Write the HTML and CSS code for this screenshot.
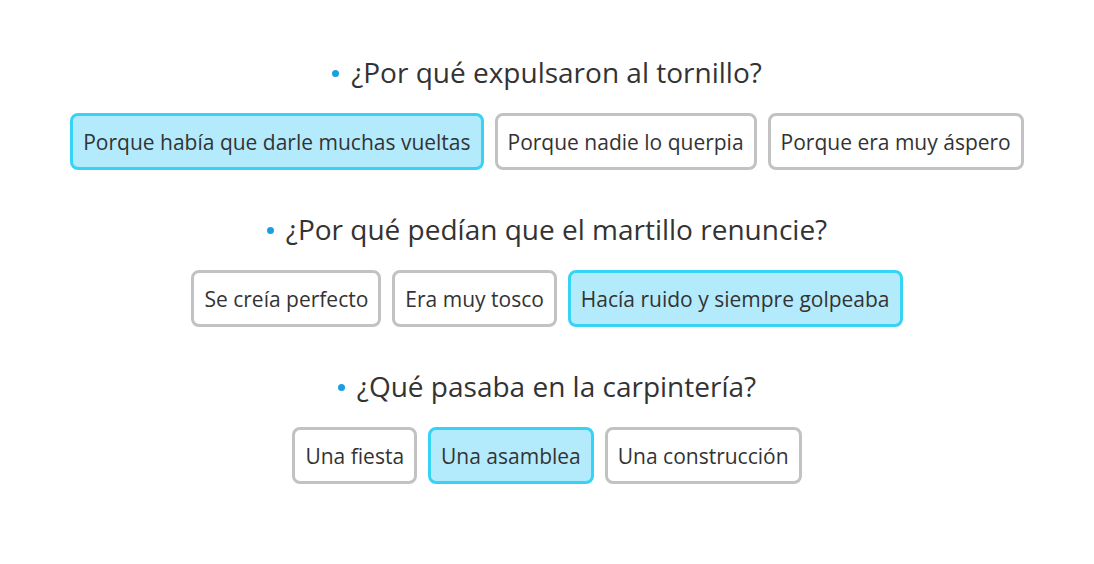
FILE: index.html
```html
<!DOCTYPE html>
<html lang="es">
<head>
<meta charset="utf-8">
<link rel="stylesheet" href="styles.css">
</head>
<body>
<main class="quiz">
  <section class="item">
    <h2 class="question"><span class="dot"></span>¿Por qué expulsaron al tornillo?</h2>
    <div class="options">
      <button class="opt selected">Porque había que darle muchas vueltas</button>
      <button class="opt">Porque nadie lo querpia</button>
      <button class="opt">Porque era muy áspero</button>
    </div>
  </section>
  <section class="item">
    <h2 class="question"><span class="dot"></span>¿Por qué pedían que el martillo renuncie?</h2>
    <div class="options">
      <button class="opt">Se creía perfecto</button>
      <button class="opt">Era muy tosco</button>
      <button class="opt selected">Hacía ruido y siempre golpeaba</button>
    </div>
  </section>
  <section class="item">
    <h2 class="question"><span class="dot"></span>¿Qué pasaba en la carpintería?</h2>
    <div class="options">
      <button class="opt">Una fiesta</button>
      <button class="opt selected">Una asamblea</button>
      <button class="opt">Una construcción</button>
    </div>
  </section>
</main>
</body>
</html>
```
FILE: styles.css
```css
html, body {
  margin: 0;
  padding: 0;
  background: #ffffff;
}
body {
  font-family: "Open Sans", "Noto Sans", "Liberation Sans", sans-serif;
  color: #333333;
}
.quiz {
  display: flex;
  flex-direction: column;
  align-items: center;
  padding-top: 52px;
  gap: 39px;
}
.item {
  display: flex;
  flex-direction: column;
  align-items: center;
  gap: 21px;
}
.question {
  margin: 0;
  font-weight: 400;
  font-size: 28px;
  line-height: 40px;
  color: #333333;
  display: flex;
  align-items: center;
}
.dot {
  width: 7px;
  height: 7px;
  border-radius: 50%;
  background: #1a9fe0;
  margin-right: 12px;
  margin-top: 3px;
}
.options {
  display: flex;
  gap: 11px;
}
.opt {
  font-family: inherit;
  font-size: 21px;
  color: #333333;
  background: #ffffff;
  border: 3px solid #c2c2c2;
  border-radius: 8px;
  height: 57px;
  padding: 0 10px;
  cursor: pointer;
}
.opt.selected {
  background: #b3ebfd;
  border-color: #36d3f4;
}
```
